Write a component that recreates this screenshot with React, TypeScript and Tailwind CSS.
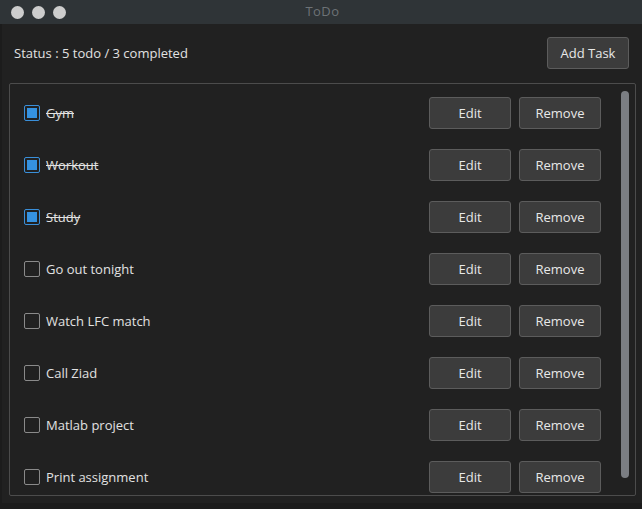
const tasks = [
  { name: 'Gym', done: true },
  { name: 'Workout', done: true },
  { name: 'Study', done: true },
  { name: 'Go out tonight', done: false },
  { name: 'Watch LFC match', done: false },
  { name: 'Call Ziad', done: false },
  { name: 'Matlab project', done: false },
  { name: 'Print assignment', done: false },
];

function Checkbox({ checked }: { checked: boolean }) {
  if (checked) {
    return (
      <div className="flex items-center justify-center w-4 h-4 rounded-[2px] border border-[#3a8fd9] shrink-0">
        <div className="w-[10px] h-[10px] bg-[#3592e0]" />
      </div>
    );
  }
  return <div className="w-4 h-4 rounded-[2px] border border-[#8a8a8a] shrink-0" />;
}

function Button({ label }: { label: string }) {
  return (
    <button className="w-[82px] h-8 pt-[2px] rounded-[3px] border border-[#5c5c5c] bg-[#3c3c3c] text-[13px] text-[#e8e8e8]">
      {label}
    </button>
  );
}

export default function App() {
  const todo = tasks.filter((t) => !t.done).length;
  const completed = tasks.length - todo;

  return (
    <div className="w-[642px] h-[509px] flex flex-col bg-[#1c1c1c] font-['Open_Sans',sans-serif] overflow-hidden">
      <div className="h-6 flex items-center bg-[#2f3437] relative shrink-0">
        <div className="flex gap-[8px] pl-[11px]">
          <div className="w-[13px] h-[13px] rounded-full bg-[#cdcdcd]" />
          <div className="w-[13px] h-[13px] rounded-full bg-[#cdcdcd]" />
          <div className="w-[13px] h-[13px] rounded-full bg-[#cdcdcd]" />
        </div>
        <div className="absolute inset-0 flex items-center justify-center pl-[3px] text-[13px] text-[#6d7276] tracking-[0.5px]">
          ToDo
        </div>
      </div>

      <div className="flex-1 flex flex-col bg-[#212121] ml-[2px] mb-[6px]">
        <div className="flex items-center justify-between pl-3 pr-[13px] pt-[13px]">
          <span className="pt-[2px] text-[13px] text-[#e2e2e2]">
            Status : {todo} todo / {completed} completed
          </span>
          <button className="w-[82px] h-8 pt-[2px] rounded-[3px] border border-[#5c5c5c] bg-[#3c3c3c] text-[13px] text-[#e8e8e8]">
            Add Task
          </button>
        </div>

        <div className="mt-[14px] ml-[7px] mr-[6px] h-[413px] rounded-[2px] border border-[#4c4c4c] flex overflow-hidden">
          <div className="flex-1 flex flex-col gap-5 pl-[14px] pt-[13px] pr-[20px]">
            {tasks.map((t) => (
              <div key={t.name} className="flex items-center h-8 shrink-0">
                <Checkbox checked={t.done} />
                <span
                  className={`ml-[6px] pt-[2px] flex-1 text-[13px] text-[#e2e2e2] ${t.done ? 'line-through' : ''}`}
                >
                  {t.name}
                </span>
                <div className="flex gap-2">
                  <Button label="Edit" />
                  <Button label="Remove" />
                </div>
              </div>
            ))}
          </div>
          <div className="w-[8px] mr-[6px] pt-[7px] pb-[17px] flex">
            <div className="w-full rounded-full bg-[#7b7e83]" />
          </div>
        </div>
      </div>
    </div>
  );
}
